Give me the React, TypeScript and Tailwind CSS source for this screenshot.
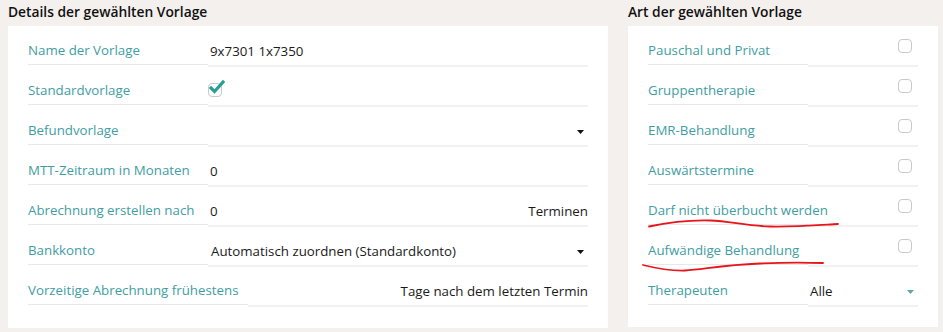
import React from 'react';

const font = { fontFamily: '"Open Sans", "Noto Sans", sans-serif' };

function Caret({ teal = false }: { teal?: boolean }) {
  return (
    <svg width="7" height="4" viewBox="0 0 7 4" className="shrink-0">
      <path d="M0 0h7L3.5 4z" fill={teal ? '#5aa8a8' : '#111'} />
    </svg>
  );
}

function Box({ checked = false }: { checked?: boolean }) {
  return (
    <span className="relative inline-block w-[14px] h-[14px] rounded-[4px] border border-[#c9c9c9] bg-white">
      {checked && (
        <svg width="16" height="14" viewBox="0 0 16 14" className="absolute -top-[4px] left-[0px]">
          <path d="M2 8l3.5 3.5L14 2" fill="none" stroke="#2a9d95" strokeWidth="3.2" strokeLinecap="square" />
        </svg>
      )}
    </span>
  );
}

function Row({
  label,
  labelW = 'w-[180px]',
  children,
  alignTop = false,
}: {
  label: string;
  labelW?: string;
  children?: React.ReactNode;
  alignTop?: boolean;
}) {
  return (
    <div className="flex h-[40px]">
      <div className={`${labelW} shrink-0 pt-[11px] flex items-center border-b border-[#e8e8e8] mb-[2px] text-[#3f9ea3] whitespace-nowrap`}>
        {label}
      </div>
      <div className={`flex-1 flex ${alignTop ? 'items-start' : 'items-center pt-[11px]'} border-b-2 border-[#f1f1f1] text-[#1a1a1a] min-w-0`}>
        {children}
      </div>
    </div>
  );
}

const rightItems = [
  'Pauschal und Privat',
  'Gruppentherapie',
  'EMR-Behandlung',
  'Auswärtstermine',
  'Darf nicht überbucht werden',
  'Aufwändige Behandlung',
];

export default function App() {
  return (
    <div style={font} className="relative w-[943px] h-[332px] bg-[#f4f0ed] flex gap-5 pl-2 text-[13.3px] overflow-hidden">
      <div className="w-[600px] flex flex-col">
        <h2 className="h-[26px] pt-[3px] text-[13.8px] font-semibold text-[#111] leading-[18px]">Details der gewählten Vorlage</h2>
        <div className="bg-white px-5 pt-px h-[302px]">
          <Row label="Name der Vorlage">
            <span className="pl-[2px]">9x7301 1x7350</span>
          </Row>
          <Row label="Standardvorlage" alignTop>
            <span className="mt-[16px]"><Box checked /></span>
          </Row>
          <Row label="Befundvorlage">
            <span className="flex-1" />
            <span className="mr-[4px]"><Caret /></span>
          </Row>
          <Row label="MTT-Zeitraum in Monaten">
            <span className="pl-[2px]">0</span>
          </Row>
          <Row label="Abrechnung erstellen nach">
            <span className="pl-[2px] flex-1">0</span>
            <span>Terminen</span>
          </Row>
          <Row label="Bankkonto">
            <span className="pl-[3px] flex-1">Automatisch zuordnen (Standardkonto)</span>
            <span className="mr-[4px]"><Caret /></span>
          </Row>
          <Row label="Vorzeitige Abrechnung frühestens" labelW="w-[220px]">
            <span className="flex-1" />
            <span>Tage nach dem letzten Termin</span>
          </Row>
        </div>
      </div>

      <div className="w-[310px] flex flex-col">
        <h2 className="h-[26px] pt-[3px] text-[13.8px] font-semibold text-[#111] leading-[18px]">Art der gewählten Vorlage</h2>
        <div className="bg-white px-5 pt-px h-[301px]">
          {rightItems.map((it) => (
            <Row key={it} label={it} labelW="w-[160px]" alignTop>
              <span className="flex-1" />
              <span className="mt-[12px] mr-[6px]"><Box /></span>
            </Row>
          ))}
          <Row label="Therapeuten" labelW="w-[160px]">
            <span className="pl-[2px] flex-1">Alle</span>
            <span className="mr-[4px]"><Caret teal /></span>
          </Row>
        </div>
      </div>

      <svg className="absolute left-0 top-0 pointer-events-none" width="943" height="332">
        <path d="M649 226.5 C 670 222, 690 220, 710 220.5 S 745 226, 770 226.5 S 820 225, 838 224" fill="none" stroke="#e8141b" strokeWidth="1.8" strokeLinecap="round" />
        <path d="M643 265 C 655 268, 668 271, 685 270.5 S 720 265, 760 263.5 S 805 263, 823 263" fill="none" stroke="#e8141b" strokeWidth="1.8" strokeLinecap="round" />
      </svg>
    </div>
  );
}
